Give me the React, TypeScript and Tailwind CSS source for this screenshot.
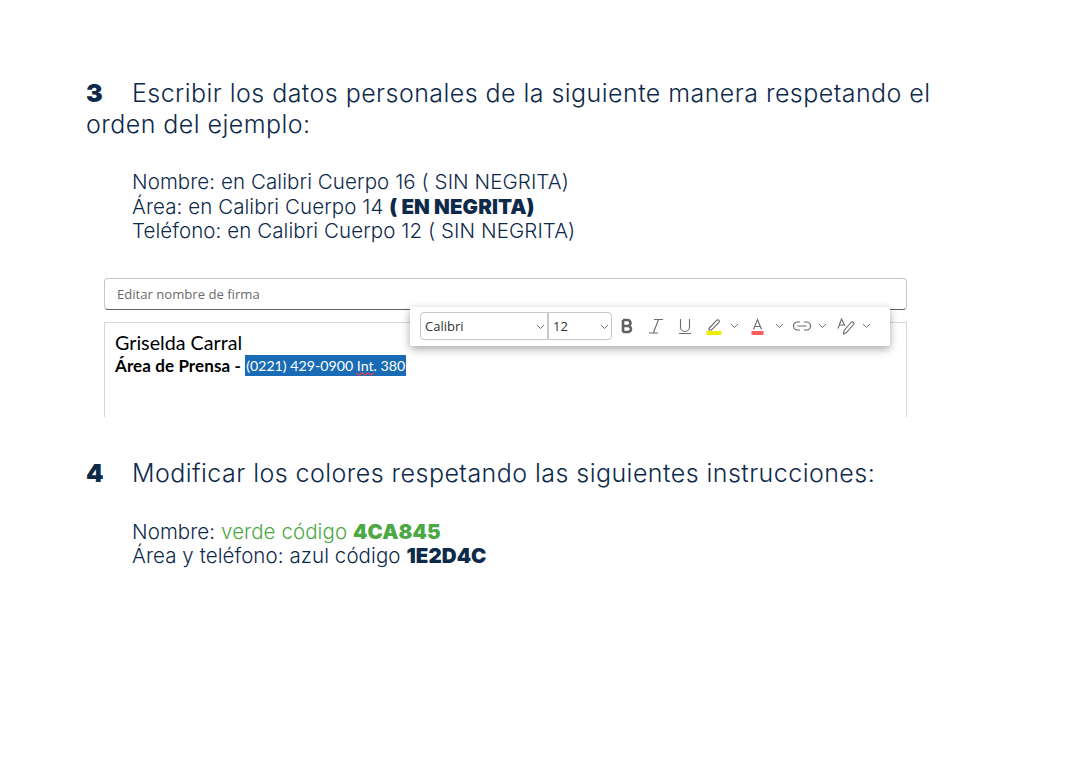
import React from 'react';

const heading = "text-[25px] leading-[31px] font-light tracking-[0.45px] text-[#0e2a4b]";
const body = "text-[20.5px] leading-[24.5px] font-light tracking-[0.08px] text-[#0e2a4b]";

function Caret({ className = "" }: { className?: string }) {
    return (
        <svg className={className} width="9" height="6" viewBox="0 0 9 6" fill="none" stroke="#757575" strokeWidth="1">
            <path d="M1 1l3.5 3.5L8 1" />
        </svg>
    );
}

function Toolbar() {
    return (
        <div className="absolute left-[306px] top-[29px] w-[480px] h-[39px] bg-white rounded-[2px] shadow-[0_3px_9px_rgba(0,0,0,0.35)] flex items-center pl-[10px] font-['Open_Sans',sans-serif] text-[#333]">
            <div className="flex h-[28px] w-[192px] border border-[#c8c8c8] rounded-[4px] text-[13px]">
                <div className="w-[128px] flex items-center justify-between pl-[4px] pr-[2px] pt-[2px] border-r-2 border-[#c8c8c8]">
                    <span>Calibri</span>
                    <Caret />
                </div>
                <div className="flex-1 flex items-center justify-between pl-[4px] pr-[2px] pt-[2px]">
                    <span>12</span>
                    <Caret />
                </div>
            </div>
            <svg className="ml-[8px]" width="14" height="16" viewBox="0 0 14 16" fill="none" stroke="#616161" strokeWidth="2.6">
                <path d="M3 2v12M3 2h4.5a3 3 0 0 1 0 6H3m0 0h5a3 3 0 0 1 0 6H3" />
            </svg>
            <svg className="ml-[15px]" width="14" height="16" viewBox="0 0 14 16" fill="none" stroke="#6b6b6b" strokeWidth="1.1">
                <path d="M5 1.5h9M9.5 1.5 4.5 14.5M0 15h9" />
            </svg>
            <svg className="ml-[15px]" width="14" height="16" viewBox="0 0 14 16" fill="none" stroke="#6b6b6b" strokeWidth="1.1">
                <path d="M2.5 1v8a4.5 4.5 0 0 0 9 0V1M1 15.5h12" />
            </svg>
            <svg className="ml-[14px]" width="16" height="17" viewBox="0 0 16 17" fill="none">
                <path d="M3 10.5 10.5 2.5a1.6 1.6 0 0 1 2.5 2L5.5 12H3z" stroke="#6b6b6b" strokeWidth="1.1" />
                <rect x="0.5" y="13" width="15" height="4" fill="#eeee00" />
            </svg>
            <Caret className="ml-[8px]" />
            <svg className="ml-[12px]" width="13" height="17" viewBox="0 0 13 17" fill="none">
                <path d="M2.5 11.5 6.5 1.5l4 10M4 8.5h5" stroke="#6b6b6b" strokeWidth="1.1" />
                <rect x="0.5" y="13" width="12" height="4" fill="#f75f5f" />
            </svg>
            <Caret className="ml-[11px]" />
            <svg className="ml-[9px]" width="18" height="10" viewBox="0 0 18 10" fill="none" stroke="#6b6b6b" strokeWidth="1.2">
                <path d="M7 1H4.5a4 4 0 0 0 0 8H7M11 1h2.5a4 4 0 0 1 0 8H11M4.5 5h9" />
            </svg>
            <Caret className="ml-[7px]" />
            <svg className="ml-[10px]" width="18" height="17" viewBox="0 0 18 17" fill="none" stroke="#6b6b6b" strokeWidth="1.1">
                <path d="M1 10.5 4.5 1 8 8M2.2 7h4.5" />
                <path d="M6.5 16l.5-3.5 7-8a1.6 1.6 0 0 1 2.5 2l-7 8z" />
            </svg>
            <Caret className="ml-[7px]" />
        </div>
    );
}

export default function App() {
    return (
        <div className="w-[1088px] h-[769px] bg-white pt-[78px] pl-[86px] font-['Inter',sans-serif] overflow-hidden">
            <p className={`${heading} w-[860px]`}>
                <span className="inline-block w-[46px] font-black">3</span>
                Escribir los datos personales de la siguiente manera respetando el orden del ejemplo:
            </p>

            <div className={`${body} ml-[46px] mt-[30px]`}>
                <p>Nombre: en Calibri Cuerpo 16 ( SIN NEGRITA)</p>
                <p>Área: en Calibri Cuerpo 14 <b className="font-black">( EN NEGRITA)</b></p>
                <p>Teléfono: en Calibri Cuerpo 12 ( SIN NEGRITA)</p>
            </div>

            {/* Signature editor capture */}
            <div className="relative ml-[18px] mt-[34px] w-[803px] h-[139px]">
                <div className="h-[32px] border border-[#c8c8c8] border-b-[#616161] rounded-[4px] pl-[12px] pt-[2px] flex items-center text-[13.1px] text-[#6b6b6b] font-['Open_Sans',sans-serif]">
                    Editar nombre de firma
                </div>
                <div className="mt-[12px] h-[95px] border-x border-t border-[#d8d8d8] pl-[10px] pt-[8px] font-['Lato',sans-serif] text-black">
                    <p className="text-[19.7px] leading-[24px]">Griselda Carral</p>
                    <p className="text-[17px] leading-[21px] font-bold tracking-[0.1px] flex">
                        Área de Prensa -&nbsp;
                        <span className="relative bg-[#1a6bb5] text-white text-[14.2px] font-normal tracking-normal px-[1px]">
                            (0221) 429-0900 Int. 380
                            <svg className="absolute left-[111px] bottom-0" width="18" height="4" viewBox="0 0 18 4" fill="none" stroke="#e8404f" strokeWidth="1.2">
                                <path d="M0 1l3 2 3-2 3 2 3-2 3 2 3-2" />
                            </svg>
                        </span>
                    </p>
                </div>
                <Toolbar />
            </div>

            <p className={`${heading} mt-[41px]`}>
                <span className="inline-block w-[46px] font-black">4</span>
                Modificar los colores respetando las siguientes instrucciones:
            </p>

            <div className={`${body} ml-[46px] mt-[31px]`}>
                <p>Nombre: <span className="text-[#4ca845]">verde código <b className="font-black">4CA845</b></span></p>
                <p>Área y teléfono: azul código <b className="font-black">1E2D4C</b></p>
            </div>
        </div>
    );
}
